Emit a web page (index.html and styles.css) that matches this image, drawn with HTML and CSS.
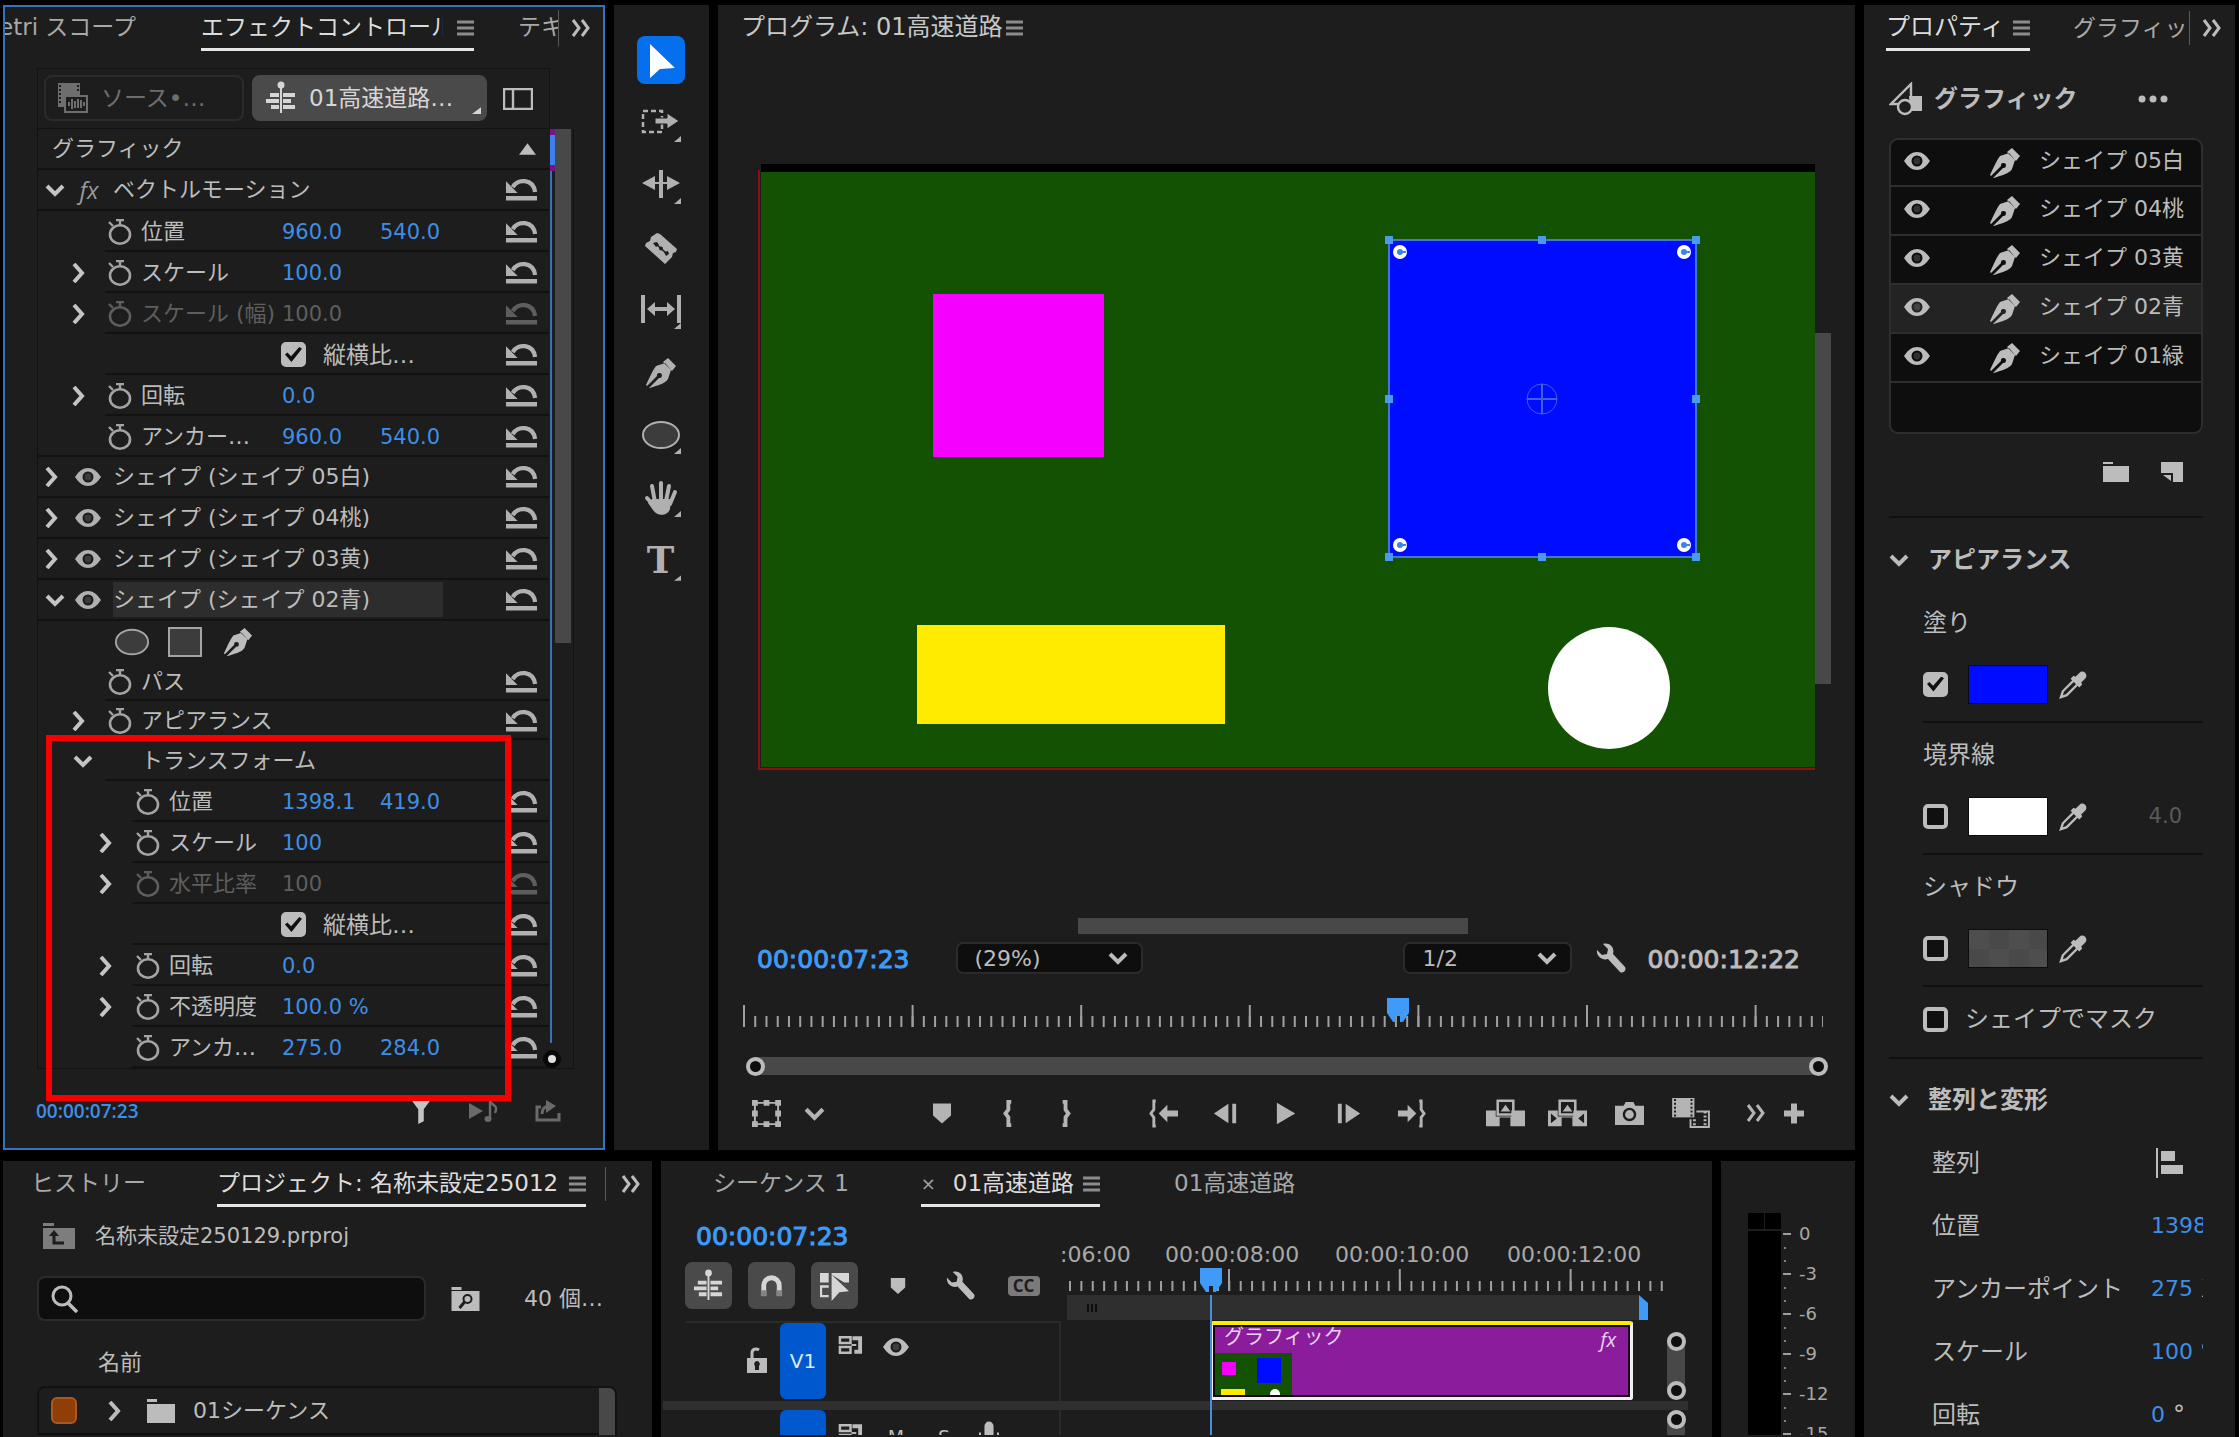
FILE: index.html
```html
<!DOCTYPE html>
<html lang="ja">
<head>
<meta charset="utf-8">
<title>01高速道路</title>
<link rel="stylesheet" href="styles.css">
</head>
<body>
<svg class="defs" width="0" height="0" aria-hidden="true">
  <symbol id="i-down" viewBox="0 0 20 14"><path d="M2 3l8 8 8-8" fill="none" stroke="currentColor" stroke-width="4"/></symbol>
  <symbol id="i-right" viewBox="0 0 14 20"><path d="M2 1l8 9-8 9" fill="none" stroke="currentColor" stroke-width="4"/></symbol>
  <symbol id="i-more" viewBox="0 0 20 18"><path d="M2 1l6 8-6 8M11 1l6 8-6 8" fill="none" stroke="currentColor" stroke-width="3"/></symbol>
  <symbol id="i-menu" viewBox="0 0 17 17"><path d="M0 3h17M0 9h17M0 15h17" stroke="currentColor" stroke-width="3"/></symbol>
  <symbol id="i-watch" viewBox="0 0 24 26"><ellipse cx="12" cy="15.500" rx="10" ry="9.200" fill="none" stroke="currentColor" stroke-width="2.600"/><path d="M8 1h8M12 1v5M1 3l4 4" stroke="currentColor" stroke-width="2.400"/></symbol>
  <symbol id="i-reset" viewBox="0 0 34 24"><path d="M8 9C13 0 29 0 31 14" fill="none" stroke="currentColor" stroke-width="4.400"/><path d="M1 3v12h12z" fill="currentColor"/><path d="M1 20.500h32" stroke="currentColor" stroke-width="4.400"/></symbol>
  <symbol id="i-eye" viewBox="0 0 26 18"><path fill-rule="evenodd" fill="currentColor" d="M0 9C4 3 8 0 13 0s9 3 13 9c-4 6-8 9-13 9S4 15 0 9zM13 3.500a5.500 5.500 0 1 0 0 11 5.500 5.500 0 0 0 0-11z"/><circle cx="13" cy="9" r="3.400" fill="currentColor" opacity=".2"/></symbol>
  <symbol id="i-pen" viewBox="0 0 32 32"><path fill="currentColor" d="M20 6l-9 3C7 14 5 20 1 28l1 1 10-10a2.500 2.500 0 1 1 2 2L4 31h1c8-3 15-4 18-9l3-9zM23 1l8 8-4 5-9-9z"/></symbol>
  <symbol id="i-folder" viewBox="0 0 28 24"><path fill="currentColor" d="M0 0h10v3H0zM0 5h28v19H0z"/></symbol>
  <symbol id="i-wrench" viewBox="0 0 30 30"><path fill="currentColor" d="M7 1c6-2 12 3 10 10l12 13c2 3-2 7-5 5L12 16C6 18 0 13 1 7l5 5 5-1 1-5z"/></symbol>
  <symbol id="i-drop" viewBox="0 0 30 30"><path d="M16 10L4 22l-2 6 6-2 12-12z" fill="none" stroke="currentColor" stroke-width="2.400"/><path fill="currentColor" d="M21 3c4-4 10 2 6 6l-4 4 1 2-3 3-9-9 3-3 2 1z"/></symbol>
  <symbol id="i-seq" viewBox="0 0 30 34"><path stroke="currentColor" stroke-width="4" d="M4 14h9M0 20h13M5 26h8M17 14h12M17 20h8M17 26h12"/><path stroke="currentColor" stroke-width="2" d="M15 4v28"/><circle cx="15" cy="4" r="3.500" fill="currentColor"/></symbol>
  <symbol id="i-marker" viewBox="0 0 20 20"><path fill="currentColor" d="M1 0h18v12l-9 8-9-8z"/></symbol>
  <symbol id="i-corner" viewBox="0 0 8 6"><path fill="currentColor" d="M8 0v6H0z"/></symbol>
  <symbol id="i-sync" viewBox="0 0 26 20"><path fill="none" stroke="currentColor" stroke-width="2.600" d="M2 2h11v6H2zM2 12h11v6H2z"/><path fill="currentColor" d="M15 1h10v18h-8v-4h4V5h-6z"/><path stroke="currentColor" stroke-width="2" d="M14 10h5"/></symbol>
  <symbol id="i-head" viewBox="0 0 22 24"><path fill="#3f9bf7" d="M0 0h22v15l-6 9h-3v-6h-4v6H6l-6-9z"/></symbol>
</svg>

<main class="app">
  <div class="work">
    <div class="upper">
      <section class="panel effects" aria-label="エフェクトコントロール">
        <nav class="tabs">
          <a href="#" class="tab tab-tail"><span>Lumetri スコープ</span></a>
          <a href="#" class="tab active tab-fx"><span class="clip">エフェクトコントロール</span><svg class="menu"><use href="#i-menu"/></svg></a>
          <a href="#" class="tab tab-cut">テキスト</a>
          <button class="more" aria-label="その他"><svg><use href="#i-more"/></svg></button>
        </nav>
        <div class="src-bar">
          <button class="src"><svg viewBox="0 0 30 30"><path fill="currentColor" d="M0 0h22v12H6v12H0z"/><path d="M2 2v20M20 2v8" stroke="#1d1d1d" stroke-width="2" stroke-dasharray="2 2"/><path fill="none" stroke="currentColor" stroke-width="2" d="M7 13h22v16H7z"/><path stroke="currentColor" stroke-width="2" d="M11 19v4M14 16v10M17 18v7M20 16v9M23 17v8M26 19v4"/></svg>ソース•…</button>
          <button class="src on"><svg><use href="#i-seq"/></svg>01高速道路…<svg class="corner"><use href="#i-corner"/></svg></button>
          <button class="icon split" aria-label="タイムライン表示"><svg viewBox="0 0 30 22"><path fill="none" stroke="currentColor" stroke-width="2.400" d="M1 1h28v20H1zM10 1v20"/></svg></button>
        </div>
        <div class="params">
          <div class="rows">
            <div class="row head"><span>グラフィック</span><svg viewBox="0 0 18 12"><path fill="currentColor" d="M9 0l9 12H0z"/></svg></div>
            <div class="row l0"><button class="tw"><svg class="dn"><use href="#i-down"/></svg></button><i class="fx">fx</i><span class="lb">ベクトルモーション</span><button class="rs"><svg><use href="#i-reset"/></svg></button></div>
            <div class="row l1"><span class="tw"></span><div class="cells"><button class="sw"><svg><use href="#i-watch"/></svg></button><span class="lb">位置</span><button class="val">960.0</button><button class="val">540.0</button><button class="rs"><svg><use href="#i-reset"/></svg></button></div></div>
            <div class="row l1"><button class="tw"><svg class="rt"><use href="#i-right"/></svg></button><div class="cells"><button class="sw"><svg><use href="#i-watch"/></svg></button><span class="lb">スケール</span><button class="val">100.0</button><button class="rs"><svg><use href="#i-reset"/></svg></button></div></div>
            <div class="row l1 off"><button class="tw"><svg class="rt"><use href="#i-right"/></svg></button><div class="cells"><button class="sw"><svg><use href="#i-watch"/></svg></button><span class="lb">スケール (幅)</span><button class="val">100.0</button><button class="rs"><svg><use href="#i-reset"/></svg></button></div></div>
            <div class="row l1"><span class="tw"></span><div class="cells"><label class="check"><input type="checkbox" checked>縦横比…</label><button class="rs"><svg><use href="#i-reset"/></svg></button></div></div>
            <div class="row l1"><button class="tw"><svg class="rt"><use href="#i-right"/></svg></button><div class="cells"><button class="sw"><svg><use href="#i-watch"/></svg></button><span class="lb">回転</span><button class="val">0.0</button><button class="rs"><svg><use href="#i-reset"/></svg></button></div></div>
            <div class="row l1 last"><span class="tw"></span><div class="cells"><button class="sw"><svg><use href="#i-watch"/></svg></button><span class="lb">アンカー…</span><button class="val">960.0</button><button class="val">540.0</button><button class="rs"><svg><use href="#i-reset"/></svg></button></div></div>
            <div class="row l0"><button class="tw"><svg class="rt"><use href="#i-right"/></svg></button><svg class="eye"><use href="#i-eye"/></svg><span class="lb">シェイプ (シェイプ 05白)</span><button class="rs"><svg><use href="#i-reset"/></svg></button></div>
            <div class="row l0"><button class="tw"><svg class="rt"><use href="#i-right"/></svg></button><svg class="eye"><use href="#i-eye"/></svg><span class="lb">シェイプ (シェイプ 04桃)</span><button class="rs"><svg><use href="#i-reset"/></svg></button></div>
            <div class="row l0"><button class="tw"><svg class="rt"><use href="#i-right"/></svg></button><svg class="eye"><use href="#i-eye"/></svg><span class="lb">シェイプ (シェイプ 03黄)</span><button class="rs"><svg><use href="#i-reset"/></svg></button></div>
            <div class="row l0"><button class="tw"><svg class="dn"><use href="#i-down"/></svg></button><svg class="eye"><use href="#i-eye"/></svg><span class="lb sel">シェイプ (シェイプ 02青)</span><button class="rs"><svg><use href="#i-reset"/></svg></button></div>
            <div class="row masks">
              <button aria-label="楕円"><svg viewBox="0 0 38 30"><ellipse cx="19" cy="15" rx="17" ry="13" fill="#3c3c3c" stroke="#a4a4a4" stroke-width="2"/></svg></button>
              <button aria-label="長方形"><svg viewBox="0 0 34 30"><path d="M1 1h32v28H1z" fill="#3c3c3c" stroke="#a4a4a4" stroke-width="2"/></svg></button>
              <button aria-label="ペン"><svg><use href="#i-pen"/></svg></button>
            </div>
            <div class="row l1 low"><span class="tw"></span><div class="cells"><button class="sw"><svg><use href="#i-watch"/></svg></button><span class="lb">パス</span><button class="rs"><svg><use href="#i-reset"/></svg></button></div></div>
            <div class="row l1 low"><button class="tw"><svg class="rt"><use href="#i-right"/></svg></button><div class="cells"><button class="sw"><svg><use href="#i-watch"/></svg></button><span class="lb">アピアランス</span><button class="rs"><svg><use href="#i-reset"/></svg></button></div></div>
            <div class="row l1"><button class="tw"><svg class="dn"><use href="#i-down"/></svg></button><div class="cells"><span class="lb group">トランスフォーム</span></div></div>
            <div class="row l2"><span class="tw"></span><div class="cells"><button class="sw"><svg><use href="#i-watch"/></svg></button><span class="lb">位置</span><button class="val">1398.1</button><button class="val">419.0</button><button class="rs"><svg><use href="#i-reset"/></svg></button></div></div>
            <div class="row l2"><button class="tw"><svg class="rt"><use href="#i-right"/></svg></button><div class="cells"><button class="sw"><svg><use href="#i-watch"/></svg></button><span class="lb">スケール</span><button class="val">100</button><button class="rs"><svg><use href="#i-reset"/></svg></button></div></div>
            <div class="row l2 off"><button class="tw"><svg class="rt"><use href="#i-right"/></svg></button><div class="cells"><button class="sw"><svg><use href="#i-watch"/></svg></button><span class="lb">水平比率</span><button class="val">100</button><button class="rs"><svg><use href="#i-reset"/></svg></button></div></div>
            <div class="row l2"><span class="tw"></span><div class="cells"><label class="check"><input type="checkbox" checked>縦横比…</label><button class="rs"><svg><use href="#i-reset"/></svg></button></div></div>
            <div class="row l2"><button class="tw"><svg class="rt"><use href="#i-right"/></svg></button><div class="cells"><button class="sw"><svg><use href="#i-watch"/></svg></button><span class="lb">回転</span><button class="val">0.0</button><button class="rs"><svg><use href="#i-reset"/></svg></button></div></div>
            <div class="row l2"><button class="tw"><svg class="rt"><use href="#i-right"/></svg></button><div class="cells"><button class="sw"><svg><use href="#i-watch"/></svg></button><span class="lb">不透明度</span><button class="val">100.0 %</button><button class="rs"><svg><use href="#i-reset"/></svg></button></div></div>
            <div class="row l2"><span class="tw"></span><div class="cells"><button class="sw"><svg><use href="#i-watch"/></svg></button><span class="lb">アンカ…</span><button class="val">275.0</button><button class="val">284.0</button><button class="rs"><svg><use href="#i-reset"/></svg></button></div></div>
          </div>
          <div class="mini"><div class="mini-line"></div><div class="mini-scroll"></div><span class="mini-knob"></span></div>
        </div>
        <div class="fx-foot">
          <span class="tc-small">00:00:07:23</span>
          <button aria-label="フィルター"><svg class="f1" viewBox="0 0 26 28"><path fill="#c4c4c4" d="M1 0h24l-9 12v13l-6 3V12z"/></svg></button>
          <button aria-label="オーディオ再生"><svg class="f2" viewBox="0 0 30 24"><path fill="currentColor" d="M0 4l14 8-14 8z"/><path fill="none" stroke="currentColor" stroke-width="2.400" d="M21 20V2c2 5 9 4 5 12"/><ellipse cx="19" cy="20" rx="3.500" ry="3" fill="currentColor"/></svg></button>
          <button aria-label="書き出し"><svg class="f3" viewBox="0 0 26 22"><path fill="none" stroke="currentColor" stroke-width="3" d="M6 7H2v13h22v-7M7 14c0-5 3-8 7-8"/><path fill="currentColor" d="M11 0l10 6-10 7z"/></svg></button>
        </div>
        <div class="callout"></div>
      </section>

      <section class="panel tools" aria-label="ツール">
        <button class="on" aria-label="選択"><svg viewBox="0 0 48 48"><path fill="#fff" d="M13 8l25 24-15 1-10 9z"/></svg></button>
        <button aria-label="トラックの前方選択"><svg viewBox="0 0 48 48"><path d="M6 12h19v21H6z" fill="none" stroke="currentColor" stroke-width="2.500" stroke-dasharray="5 3"/><path fill="currentColor" stroke="#1d1d1d" d="M18 19h12v-5l12 8-12 8v-5H18z"/><path fill="currentColor" d="M44 37v6h-7z"/></svg></button>
        <button aria-label="リップル"><svg viewBox="0 0 48 48"><path fill="currentColor" d="M22 9h4v28h-4zM5 22l13-7v6h12v-6l13 7-13 7v-6H18v6zM44 37v6h-7z"/></svg></button>
        <button aria-label="レーザー"><svg viewBox="0 0 48 48"><path fill="currentColor" d="M20 9l3 1 17 15-1 3-3 1-1 4-7 7-20-18 1-3 4-2 1-4z"/><path d="M18 19l12 11" stroke="#1d1d1d" stroke-width="1.600"/><path fill="#1d1d1d" d="M16 19l4-1 2 3-3 2zM27 28l4-1 1 3-3 2z"/><circle cx="24" cy="24.500" r="2" fill="#1d1d1d"/></svg></button>
        <button aria-label="スリップ"><svg viewBox="0 0 48 48"><path fill="currentColor" d="M4 9h4v28H4zM40 9h4v28h-4zM10 23l8-7v5h12v-5l8 7-8 7v-5H18v5zM44 37v6h-7z"/></svg></button>
        <button aria-label="ペン"><svg viewBox="-8 -8 48 48"><use href="#i-pen" width="32" height="32"/></svg></button>
        <button aria-label="楕円"><svg viewBox="0 0 48 48"><ellipse cx="24" cy="24" rx="18" ry="13" fill="#3c3c3c" stroke="currentColor" stroke-width="2"/><path fill="currentColor" d="M44 37v6h-7z"/></svg></button>
        <button aria-label="手のひら"><svg viewBox="0 0 48 48"><g fill="none" stroke="currentColor" stroke-width="4" stroke-linecap="round"><path d="M18 28L15 12M24 26V9M29 27l3-15M33 30l5-12M18 33L10 24"/></g><path fill="currentColor" d="M15 25h19l-1 10c-2 7-13 8-17 1l-5-7z"/><path fill="currentColor" d="M44 37v6h-7z"/></svg></button>
        <button class="type" aria-label="文字">T<svg><use href="#i-corner"/></svg></button>
      </section>

      <section class="panel program" aria-label="プログラム">
        <nav class="tabs"><a href="#" class="tab">プログラム: 01高速道路<svg class="menu"><use href="#i-menu"/></svg></a></nav>
        <div class="stage">
          <svg class="canvas" viewBox="0 0 1057 608">
            <path fill="#000" d="M3 0h1054v8H3z"/><path fill="#145203" d="M3 8h1054v595H3z"/>
            <path d="M1 6v599h1056" fill="none" stroke="#8c1010" stroke-width="2"/>
            <path fill="#f400ff" d="M175 130h171v163H175z"/><path fill="#ffeb00" d="M159 461h308v99H159z"/>
            <circle cx="851" cy="524" r="61" fill="#fff"/>
            <path fill="#000cff" stroke="#3f78d8" stroke-width="2" d="M631 76h307v317H631z"/>
            <g fill="none" stroke="#3c62dc"><circle cx="784" cy="235" r="15"/><path d="M769 235h30M784 220v30" stroke-width="2"/></g>
            <path fill="#4a9bf0" d="M627 72h8v8h-8zM780 72h8v8h-8zM934 72h8v8h-8zM627 231h8v8h-8zM934 231h8v8h-8zM627 389h8v8h-8zM780 389h8v8h-8zM934 389h8v8h-8z"/>
            <g fill="#fff"><circle cx="642" cy="88" r="7"/><circle cx="926" cy="88" r="7"/><circle cx="642" cy="381" r="7"/><circle cx="926" cy="381" r="7"/></g>
            <g fill="#3a86e0"><circle cx="642" cy="88" r="3"/><circle cx="926" cy="88" r="3"/><circle cx="642" cy="381" r="3"/><circle cx="926" cy="381" r="3"/><path d="M642 87h6v2h-6zM926 87h6v2h-6zM642 380h6v2h-6zM926 380h6v2h-6z"/></g>
          </svg>
          <div class="vscroll"></div>
        </div>
        <div class="hscroll"></div>
        <div class="pg-info">
          <span class="tc blue">00:00:07:23</span>
          <span class="drop d1"><select aria-label="ズーム"><option>(29%)</option></select><svg><use href="#i-down"/></svg></span>
          <span class="drop d2"><select aria-label="再生時の解像度"><option>1/2</option></select><svg><use href="#i-down"/></svg></span>
          <button class="wr" aria-label="設定"><svg><use href="#i-wrench"/></svg></button>
          <span class="tc">00:00:12:22</span>
        </div>
        <div class="pg-ruler">
          <svg class="ticks"><path d="M1 23.500h1080" stroke="#a0a0a0" stroke-width="11" stroke-dasharray="2 9.240"/><path d="M1 18h1080" stroke="#a0a0a0" stroke-width="22" stroke-dasharray="2 166.600"/></svg>
          <svg class="head"><use href="#i-head"/></svg>
        </div>
        <div class="zoombar"><i></i><i></i></div>
        <div class="transport">
          <div class="g ga">
            <button aria-label="変形"><svg viewBox="0 0 30 30"><path d="M3 4h24v22H3z" fill="none" stroke="currentColor" stroke-width="2"/><path fill="currentColor" d="M0 1h6v6H0zM12 1h6v6h-6zM24 1h6v6h-6zM0 12h6v6H0zM24 12h6v6h-6zM0 23h6v6H0zM12 23h6v6h-6zM24 23h6v6h-6z"/></svg></button>
            <button aria-label="開く"><svg class="dn"><use href="#i-down"/></svg></button>
          </div>
          <div class="g gb">
            <button aria-label="マーカー"><svg class="mk"><use href="#i-marker"/></svg></button>
            <button aria-label="インをマーク"><svg viewBox="0 0 30 30"><path d="M22 3h-3v8l-3 4 3 4v8h3" fill="none" stroke="currentColor" stroke-width="4"/></svg></button>
            <button aria-label="アウトをマーク"><svg viewBox="0 0 30 30"><path d="M11 3h3v8l3 4-3 4v8h-3" fill="none" stroke="currentColor" stroke-width="4"/></svg></button>
          </div>
          <div class="g gc">
            <button aria-label="インへ移動"><svg viewBox="0 0 30 30"><path d="M7 2H5v9l-3 4 3 4v9h2" fill="none" stroke="currentColor" stroke-width="3"/><path fill="currentColor" d="M10 15l9-9v6h11v6H19v6z"/></svg></button>
            <button aria-label="前へ"><svg viewBox="0 0 30 30"><path fill="currentColor" d="M3 15l15-10v20zM22 5h4v20h-4z"/></svg></button>
            <button aria-label="再生"><svg viewBox="0 0 30 30"><path fill="currentColor" d="M4 4l19 11L4 26z"/></svg></button>
            <button aria-label="次へ"><svg viewBox="0 0 30 30"><path fill="currentColor" d="M26 15L11 5v20zM3 5h4v20H3z"/></svg></button>
            <button aria-label="アウトへ移動"><svg viewBox="0 0 30 30"><path d="M23 2h2v9l3 4-3 4v9h-2" fill="none" stroke="currentColor" stroke-width="3"/><path fill="currentColor" d="M20 15l-9-9v6H1v6h10v6z"/></svg></button>
          </div>
          <div class="g gd">
            <button aria-label="リフト"><svg class="wide" viewBox="0 0 40 30"><path fill="currentColor" d="M0 12h10v6h16v-6h14v16H25v-9H14v9H0zM20 6l5 7H15z"/><path d="M12 2h16v14H12z" fill="none" stroke="currentColor" stroke-width="2.600"/></svg></button>
            <button aria-label="抽出"><svg class="wide" viewBox="0 0 40 30"><path fill="currentColor" fill-rule="evenodd" d="M0 12h10v6h16v-6h14v16H25v-9H14v9H0zM3 15l6 5-6 5zM37 15l-6 5 6 5zM20 6l5 7H15z"/><path d="M12 2h16v14H12z" fill="none" stroke="currentColor" stroke-width="2.600"/></svg></button>
            <button aria-label="フレームを書き出し"><svg viewBox="0 0 30 30"><path fill="currentColor" fill-rule="evenodd" d="M0 7h9l2-4h8l2 4h9v20H0zM15 9a7 7 0 1 0 0 14 7 7 0 0 0 0-14z"/><circle cx="15" cy="16" r="4.500" fill="currentColor"/></svg></button>
            <button aria-label="比較表示"><svg class="wide" viewBox="0 0 40 32"><path fill="currentColor" d="M0 0h23v20H0z"/><path d="M3 1v18M20 1v18" stroke="#1d1d1d" stroke-width="2" stroke-dasharray="2 2"/><path d="M25 14h13v16H19v-8" fill="none" stroke="currentColor" stroke-width="2"/><path d="M23 22v8M34 14v16" stroke="currentColor" stroke-width="3" stroke-dasharray="2 2"/></svg></button>
          </div>
          <div class="g ge">
            <button aria-label="その他"><svg class="mo"><use href="#i-more"/></svg></button>
            <button aria-label="追加"><svg class="mk" viewBox="0 0 20 20"><path d="M10 0v20M0 10h20" stroke="currentColor" stroke-width="6"/></svg></button>
          </div>
        </div>
      </section>
    </div>

    <div class="lower">
      <section class="panel project" aria-label="プロジェクト">
        <nav class="tabs">
          <a href="#" class="tab tab-h">ヒストリー</a>
          <a href="#" class="tab active tab-p"><span class="clip">プロジェクト: 名称未設定250129</span><svg class="menu"><use href="#i-menu"/></svg></a>
          <button class="more" aria-label="その他"><svg><use href="#i-more"/></svg></button>
        </nav>
        <div class="path"><svg viewBox="0 0 32 26"><path fill="#7d7d7d" d="M0 0h11v3H0zM0 5h32v21H0z"/><path d="M11 10v10h10" fill="none" stroke="#1d1d1d" stroke-width="3"/><path fill="#1d1d1d" d="M11 7l5 6H6z"/></svg>名称未設定250129.prproj</div>
        <div class="find">
          <label class="search"><svg viewBox="0 0 28 28"><circle cx="11" cy="11" r="9" fill="none" stroke="currentColor" stroke-width="3"/><path d="M17 18l9 9" stroke="currentColor" stroke-width="3.500"/></svg><input type="text" aria-label="検索"></label>
          <button aria-label="検索ビン"><svg viewBox="0 0 28 24"><path fill="currentColor" d="M0 0h10v3H0zM0 4h28v20H0z"/><circle cx="16" cy="12" r="4" fill="none" stroke="#1d1d1d" stroke-width="2"/><path d="M13 15l-5 6" stroke="#1d1d1d" stroke-width="3"/></svg></button>
          <span>40 個…</span>
        </div>
        <div class="col-name">名前</div>
        <div class="bins"><div class="bin"><i></i><svg class="rt"><use href="#i-right"/></svg><svg class="fo"><use href="#i-folder"/></svg>01シーケンス</div><div class="bin-scroll"></div></div>
      </section>

      <section class="panel timeline" aria-label="タイムライン">
        <nav class="tabs">
          <a href="#" class="tab tab-s">シーケンス 1</a>
          <a href="#" class="tab active tab-q"><small>×</small>01高速道路<svg class="menu"><use href="#i-menu"/></svg></a>
          <a href="#" class="tab tab-r">01高速道路</a>
        </nav>
        <div class="tl-top">
          <div class="tl-ctl">
            <span class="tc blue">00:00:07:23</span>
            <div class="tl-btns">
              <button class="on" aria-label="ネスト"><svg><use href="#i-seq"/></svg></button>
              <button class="on" aria-label="スナップ"><svg viewBox="0 0 30 34"><path d="M7 27V17a8 8 0 0 1 16 0v10" fill="none" stroke="currentColor" stroke-width="5"/><path stroke="#858585" stroke-width="6" d="M4 25h6M20 25h6"/></svg></button>
              <button class="on" aria-label="リンクされた選択"><svg viewBox="0 0 30 34"><path fill="currentColor" d="M0 4h9v10H0zM12 4h18v10h-5L12 6zM12 6l18 17-10 1-8 9z"/><path fill="none" stroke="currentColor" stroke-width="2.500" d="M9 18H1v10h8"/></svg></button>
              <button aria-label="マーカー"><svg class="mk2"><use href="#i-marker"/></svg></button>
              <button aria-label="設定"><svg class="wr2"><use href="#i-wrench"/></svg></button>
              <button class="cc"><b>CC</b></button>
            </div>
          </div>
          <div class="tl-time">
            <svg class="tl-scale"><g class="tl-nums"><text x="-7" y="55">:06:00</text><text x="98" y="55">00:00:08:00</text><text x="268" y="55">00:00:10:00</text><text x="440" y="55">00:00:12:00</text></g><path d="M2 79h595" stroke="#a0a0a0" stroke-width="10" stroke-dasharray="2 9.380"/><path d="M161 73h436" stroke="#a0a0a0" stroke-width="22" stroke-dasharray="2 168.800"/></svg>
            <div class="workbar"><i></i><i></i><i></i><svg viewBox="0 0 9 25"><path fill="#3f9bf7" d="M0 0l9 8v17H0z"/></svg></div>
            <svg class="head"><use href="#i-head"/></svg>
            <div class="playline"></div>
          </div>
        </div>
        <div class="track">
          <div class="th">
            <svg class="lock" viewBox="0 0 22 26"><path fill="currentColor" fill-rule="evenodd" d="M1 11h20v15H1zM11 14a3 3 0 0 0-2 5v4h4v-4a3 3 0 0 0-2-5z"/><path d="M6 12V6c0-4 4-5 7-3" fill="none" stroke="currentColor" stroke-width="3"/></svg>
            <button class="vb">V1</button>
            <svg class="sync"><use href="#i-sync"/></svg><svg class="eye"><use href="#i-eye"/></svg>
          </div>
          <div class="lane"><div class="clipbar"><span>グラフィック</span><i class="fx">fx</i>
            <svg viewBox="0 0 77 42"><path fill="#145203" d="M0 0h77v42H0z"/><path fill="#f400ff" d="M7 9h14v13H7z"/><path fill="#000cff" d="M42 5h24v25H42z"/><path fill="#ffeb00" d="M6 36h24v6H6z"/><circle cx="60" cy="41" r="5" fill="#fff"/></svg></div></div>
          <div class="vz"><i></i><i></i></div>
        </div>
        <div class="band"></div>
        <div class="track">
          <div class="th audio">
            <span class="lock"></span><button class="vb">A1</button>
            <svg class="sync"><use href="#i-sync"/></svg><button class="ms">M</button><button class="ms">S</button>
            <svg class="mic" viewBox="0 0 22 34"><rect x="6" width="10" height="20" rx="5" fill="currentColor"/><path d="M1 12v4c0 11 20 11 20 0v-4M11 24v8" fill="none" stroke="currentColor" stroke-width="2.500"/></svg>
          </div>
          <div class="lane"></div>
          <div class="vz"><i></i><i></i></div>
        </div>
      </section>

      <section class="panel meter" aria-label="オーディオメーター">
        <div class="bars"><i></i><i></i><b></b></div>
        <ul><li>0</li><li>-3</li><li>-6</li><li>-9</li><li>-12</li><li>-15</li></ul>
      </section>
    </div>
  </div>

  <section class="panel props" aria-label="プロパティ">
    <nav class="tabs">
      <a href="#" class="tab active tab-pr">プロパティ<svg class="menu"><use href="#i-menu"/></svg></a>
      <a href="#" class="tab tab-g">グラフィックテンプレート</a>
      <button class="more" aria-label="その他"><svg><use href="#i-more"/></svg></button>
    </nav>
    <div class="pr-title"><svg viewBox="0 0 34 34"><path d="M22 14V2L2 22h8" fill="none" stroke="currentColor" stroke-width="2.400"/><path fill="currentColor" d="M20 14h13v15H21z"/><circle cx="16" cy="25" r="7" fill="#1d1d1d" stroke="currentColor" stroke-width="2.400"/></svg><h2>グラフィック</h2><button aria-label="メニュー"><svg viewBox="0 0 30 8"><g fill="currentColor"><circle cx="4" cy="4" r="3.500"/><circle cx="15" cy="4" r="3.500"/><circle cx="26" cy="4" r="3.500"/></g></svg></button></div>
    <ul class="layers">
      <li><svg class="eye"><use href="#i-eye"/></svg><svg class="pen"><use href="#i-pen"/></svg>シェイプ 05白</li>
      <li><svg class="eye"><use href="#i-eye"/></svg><svg class="pen"><use href="#i-pen"/></svg>シェイプ 04桃</li>
      <li><svg class="eye"><use href="#i-eye"/></svg><svg class="pen"><use href="#i-pen"/></svg>シェイプ 03黄</li>
      <li class="sel"><svg class="eye"><use href="#i-eye"/></svg><svg class="pen"><use href="#i-pen"/></svg>シェイプ 02青</li>
      <li><svg class="eye"><use href="#i-eye"/></svg><svg class="pen"><use href="#i-pen"/></svg>シェイプ 01緑</li>
    </ul>
    <div class="layer-btns"><button aria-label="グループ"><svg viewBox="0 0 26 20"><path fill="currentColor" d="M0 0h10v2H0zM0 4h26v16H0z"/></svg></button><button aria-label="新規レイヤー"><svg viewBox="0 0 22 20"><path fill="currentColor" d="M0 0h22v20H12v-9H0zM2 13h8v6z"/></svg></button></div>
    <div class="sec">
      <h3><svg><use href="#i-down"/></svg>アピアランス</h3>
      <div class="ap"><p>塗り</p><div><input type="checkbox" checked aria-label="塗り"><button class="swatch s-blue" aria-label="塗りの色"></button><button class="dr" aria-label="スポイト"><svg><use href="#i-drop"/></svg></button></div></div>
      <div class="ap"><p>境界線</p><div><input type="checkbox" aria-label="境界線"><button class="swatch s-white" aria-label="境界線の色"></button><button class="dr" aria-label="スポイト"><svg><use href="#i-drop"/></svg></button><span class="w">4.0</span></div></div>
      <div class="ap"><p>シャドウ</p><div><input type="checkbox" aria-label="シャドウ"><button class="swatch s-none" aria-label="シャドウの色"></button><button class="dr" aria-label="スポイト"><svg><use href="#i-drop"/></svg></button></div></div>
      <label class="mask"><input type="checkbox">シェイプでマスク</label>
    </div>
    <div class="sec al">
      <h3><svg><use href="#i-down"/></svg>整列と変形</h3>
      <div class="kv"><span>整列</span><button aria-label="左揃え"><svg viewBox="0 0 28 30"><path fill="currentColor" d="M0 0h2v30H0zM5 3h14v10H5zM5 17h22v9H5z"/></svg></button></div>
      <div class="kv"><span>位置</span><button>1398.1</button></div>
      <div class="kv"><span>アンカーポイント</span><button>275</button><em>X</em></div>
      <div class="kv"><span>スケール</span><button>100</button><em>%</em></div>
      <div class="kv"><span>回転</span><button>0</button><em>°</em></div>
    </div>
  </section>
</main>
</body>
</html>
```
FILE: styles.css
```css
* { box-sizing: border-box; }
body { margin: 0; background: #000; color: #bcbcbc; font: 22px/30px "DejaVu Sans", "Noto Sans CJK JP", sans-serif; overflow: hidden; }
button { margin: 0; padding: 0; border: 0; background: none; color: inherit; font: inherit; display: grid; place-items: center; }
a { color: inherit; text-decoration: none; }
ul, p, h2, h3 { margin: 0; padding: 0; list-style: none; }
svg { display: block; flex: none; }
.defs { position: absolute; }

.app { display: flex; gap: 9px; height: 100vh; padding: 5px 4px 0 3px; }
.work { flex: 1; min-width: 0; display: flex; flex-direction: column; gap: 11px; }
.upper { display: flex; flex: none; gap: 9px; }
.lower { display: flex; flex: 1; min-height: 0; gap: 9px; }
.panel { background: #1d1d1d; border: 2px solid #1d1d1d; overflow: hidden; position: relative; }

/* tab strips */
.tabs { display: flex; height: 44px; }
.tab { display: flex; align-items: center; height: 44px; font-size: 23px; line-height: 41px; white-space: nowrap; border-bottom: 3px solid transparent; color: #a8a8a8; }
.tab.active { border-color: #e6e6e6; color: #dcdcdc; }
.clip { flex: 1; min-width: 0; overflow: hidden; }
.menu { width: 17px; height: 17px; color: #8c8c8c; margin-left: 11px; }
.more svg { width: 22px; height: 18px; color: #bcbcbc; }
.more { width: 50px; height: 42px; }

/* effect controls */
.effects { width: 602px; height: 1145px; border-color: #3574bd; }
.tab-tail { width: 131px; justify-content: flex-end; overflow: hidden; }
.tab-fx { width: 273px; margin-left: 65px; }
.tab-fx .menu { margin-left: 14px; }
.tab-cut { width: 41px; margin-left: 44px; overflow: hidden; height: 38px; margin-top: 3px; line-height: 35px; border-right: 1px solid #5a5a5a; }
.effects .more { width: 44px; }
.src-bar { display: flex; gap: 8px; width: 513px; margin: 17px 0 0 32px; padding: 6px; border: 1px solid #121212; height: 61px; }
.src { display: flex; align-items: center; gap: 13px; width: 200px; height: 46px; padding-left: 12px; border: 2px solid #2b2b2b; border-radius: 8px; color: #6e6e6e; font-size: 23px; position: relative; }
.src svg { width: 30px; height: 36px; }
.src.on { width: 235px; background: #4a4a4a; border-color: #4a4a4a; color: #d6d6d6; white-space: nowrap; }
.src .corner { position: absolute; right: 4px; bottom: 4px; width: 9px; height: 9px; }
.split { margin-left: 8px; }
.split svg { width: 30px; height: 22px; }
.params { display: flex; margin-left: 32px; width: 537px; border: 1px solid #121212; border-top: 0; }
.rows { width: 511px; }
.row { display: flex; height: 41px; align-items: center; border-bottom: 2px solid #121212; }
.head { justify-content: space-between; padding: 0 13px 0 14px; }
.head svg { width: 17px; height: 12px; }
.l1, .l2, .masks { border-bottom: 0; }
.l1.last { border-bottom: 2px solid #121212; }
.l1.last .cells { border-bottom: 0; }
.cells { flex: 1; display: flex; align-items: center; align-self: stretch; padding-top: 2px; border-bottom: 2px solid #121212; }
.l1.low { height: 39px; }
.tw { flex: none; height: 36px; color: #c4c4c4; }
.l0 .tw { width: 34px; }
.l0 .rt { margin-right: 6px; }
.l1 .tw { width: 67px; padding-left: 15px; }
.l1 .dn { margin-left: 8px; }
.l2 .tw { width: 94px; padding-left: 42px; }
.dn { width: 20px; height: 14px; }
.rt { width: 14px; height: 20px; }
.fx { font: italic 24px/30px "Open Sans", sans-serif; }
.l0 .fx { width: 34px; text-align: center; color: #999; }
.eye { width: 26px; height: 18px; }
.l0 .eye { margin: 0 5px 0 3px; color: #b0b0b0; }
.l0 .lb { margin-left: 7px; }
.lb { white-space: nowrap; flex: none; }
.sel.lb { background: #2d2d2d; width: 330px; line-height: 35px; }
.sw { width: 30px; flex: none; }
.sw svg { width: 24px; height: 26px; color: #a4a4a4; }
.l1 .lb { width: 141px; margin-left: 6px; }
.l2 .sw { width: 32px; }
.l2 .lb { width: 113px; margin-left: 5px; }
.l1 .lb.group { margin-left: 36px; }
.val { width: 98px; flex: none; font-size: 21px; color: #3f8ee6; place-items: center start; white-space: nowrap; }
.rs { margin-left: auto; margin-right: 11px; }
.rs svg { width: 33px; height: 24px; color: #b0b0b0; }
.off .lb, .off .val, .off .sw svg, .off .rs svg { color: #5e5e5e; }
.check { display: flex; align-items: center; gap: 17px; margin-left: 176px; font-size: 23px; }
.l2 .check { margin-left: 149px; }
input[type=checkbox] { appearance: none; flex: none; width: 25px; height: 25px; margin: 0; border: 4px solid #bcbcbc; border-radius: 5px; background: #101010; display: grid; place-items: center; }
input[type=checkbox]:checked { background: #bcbcbc; }
input[type=checkbox]:checked::before { content: ""; width: 17px; height: 15px; background: #101010; clip-path: polygon(0 50%, 14% 36%, 36% 62%, 84% 0, 100% 12%, 38% 100%); }
.masks { gap: 17px; padding-left: 76px; }
.masks button { width: 36px; }
.masks svg { width: 36px; height: 30px; }
.mini { flex: 1; display: flex; gap: 3px; position: relative; padding-left: 1px; }
.mini-line { width: 2px; height: 914px; background: #3574bd; }
.mini-line::before { content: ""; display: block; width: 5px; height: 42px; background: linear-gradient(#7a1288 6px, #3f7ff0 6px, #3f7ff0 36px, #7a1288 36px); }
.mini-scroll { width: 16px; height: 514px; background: #484848; }
.mini-knob { position: absolute; left: -6px; bottom: 0; width: 18px; height: 18px; border: 5px solid #080808; border-radius: 50%; background: #e0e0e0; }
.fx-foot { display: flex; align-items: center; height: 40px; margin: 22px 42px 0 31px; color: #6a6a6a; gap: 36px; }
.tc-small { font: 600 19px/30px "Open Sans", sans-serif; color: #3f8ee6; margin-right: auto; }
.f1 { width: 24px; height: 28px; }
.f2 { width: 30px; height: 24px; }
.f3 { width: 26px; height: 22px; }
.callout { position: absolute; left: 41px; top: 728px; width: 465px; height: 366px; border: 6px solid #f90000; }

/* tools */
.tools { width: 95px; display: flex; flex-direction: column; align-items: center; justify-content: space-between; padding: 29px 2px 564px 0; color: #b0b0b0; }
.tools button { width: 48px; height: 48px; border-radius: 8px; position: relative; }
.tools svg { width: 48px; height: 48px; }
.tools .on { background: #056fed; }
.tools .type { font: 700 37px/44px "DejaVu Serif", serif; }
.tools .type svg { position: absolute; right: 4px; bottom: 3px; width: 7px; height: 6px; }

/* program monitor */
.program { flex: 1; min-width: 0; }
.program .tab { margin-left: 21px; color: #c8c8c8; font-size: 24px; }
.program .menu { margin-left: 3px; }
.stage { display: flex; align-items: flex-start; margin: 113px 22px 0 38px; }
.canvas { flex: 1; min-width: 0; height: auto; }
.vscroll { width: 16px; height: 351px; margin-top: 169px; background: #484848; }
.hscroll { width: 390px; height: 16px; margin: 146px auto 0 358px; background: #484848; }
.pg-info { display: flex; align-items: center; height: 32px; margin: 8px 53px 0 37px; }
.tc { font-size: 25px; line-height: 34px; -webkit-text-stroke: 1px; }
.pg-info .tc { padding-top: 4px; }
.blue { color: #3f9bf7; }
.drop { position: relative; display: flex; align-items: center; }
.drop select { appearance: none; width: 100%; height: 32px; padding: 0 17px; border: 2px solid #2b2b2b; border-radius: 7px; background: #0e0e0e; color: #bcbcbc; font: inherit; font-size: 22px; }
.drop svg { position: absolute; right: 15px; width: 20px; height: 14px; }
.d1 { width: 187px; margin-left: 46px; }
.d2 { width: 169px; margin-left: auto; }
.wr { margin: 0 21px 0 24px; }
.wr svg { width: 30px; height: 30px; }
.pg-ruler { position: relative; margin: 24px 28px 0 22px; height: 30px; }
.ticks { width: 100%; height: 30px; }
.head { overflow: visible; }
svg.head { position: absolute; left: 645px; top: 0; width: 22px; height: 24px; padding: 0; }
.zoombar { display: flex; justify-content: space-between; align-items: center; height: 18px; margin: 29px 25px 0 26px; background: linear-gradient(#484848, #484848) center / calc(100% - 20px) 100% no-repeat; }
.zoombar i, .vz i { width: 19px; height: 19px; border: 4px solid #bcbcbc; border-radius: 50%; background: #0e0e0e; }
.transport { display: flex; height: 60px; margin: 8px 0 0 22px; align-items: center; }
.g { display: flex; }
.g button { width: 62px; height: 40px; color: #b4b4b4; }
.g svg { width: 29px; height: 29px; }
.g .wide { width: 39px; height: 31px; }
.g svg.dn { width: 21px; height: 15px; }
.g .mk { width: 20px; height: 21px; }
.g .mo { width: 20px; height: 18px; }
.ga button { width: 48px; }
.gb { margin-left: 73px; }
.gc { margin-left: 35px; }
.gd { margin-left: 32px; }
.ge { margin-left: 15px; }
.ge button { width: 38px; }

/* project */
.project { width: 649px; flex: none; }
.tab-h { margin-left: 26px; }
.tab-p { width: 369px; margin-left: auto; }
.project .more { width: 45px; margin-left: 19px; border-left: 1px solid #5a5a5a; height: 34px; margin-top: 4px; }
.project .more svg { margin-left: 6px; }
.path { display: flex; align-items: center; gap: 20px; height: 44px; margin: 7px 0 0 38px; font-size: 21px; }
.path svg { width: 32px; height: 26px; }
.find { display: flex; align-items: center; margin: 18px 0 0 32px; }
.search { display: flex; align-items: center; width: 389px; height: 45px; padding: 0 12px; background: #0e0e0e; border: 2px solid #2b2b2b; border-radius: 8px; }
.search svg { width: 28px; height: 28px; }
.search input { flex: 1; min-width: 0; border: 0; background: none; color: inherit; font: inherit; outline: 0; }
.find button svg { width: 29px; height: 24px; }
.find button { margin: 0 44px 0 25px; }
.col-name { margin: 27px 0 0 93px; }
.bins { display: flex; justify-content: space-between; margin: 8px 33px 0 32px; height: 60px; border: 2px solid #121212; border-radius: 8px 8px 0 0; overflow: hidden; }
.bin { flex: 1; display: flex; align-items: center; height: 47px; padding-left: 12px; border-bottom: 2px solid #0e0e0e; }
.bin i { width: 26px; height: 27px; margin-right: 31px; background: #8f3f06; border: 2px solid #a95a20; border-radius: 6px; }
.bin .fo { width: 28px; height: 24px; margin: 0 18px 0 25px; }
.bin-scroll { width: 16px; background: #484848; }

/* timeline */
.timeline { flex: 1; min-width: 0; }
.tab-s { margin-left: 50px; }
.tab-q { margin-left: 72px; }
.tab-q small { width: 32px; font-size: 18px; color: #a0a0a0; }
.tab-q .menu { margin-left: 9px; }
.tab-r { margin-left: 74px; }
.tl-top { display: grid; grid-template-columns: 404px 1fr; height: 114px; }
.tl-ctl { padding: 13px 0 0 33px; }
.tl-ctl .tc { display: block; }
.tl-btns { display: flex; gap: 16px; margin: 8px 0 0 -11px; }
.tl-btns button { width: 47px; height: 47px; border-radius: 7px; }
.tl-btns .on { background: #4a4a4a; color: #d6d6d6; }
.tl-btns svg { width: 29px; height: 33px; }
.tl-btns .mk2 { width: 16px; height: 18px; }
.tl-btns .wr2 { width: 29px; height: 29px; }
.tl-btns .cc b { width: 32px; background: #7a7a7a; color: #1d1d1d; border-radius: 4px; font: 700 17px/20px "Open Sans", sans-serif; text-align: center; }
.tl-time { position: relative; }
.tl-scale { width: 100%; height: 88px; overflow: visible; }
.tl-nums { font-size: 22px; fill: #a8a8a8; }
.workbar { display: flex; align-items: center; gap: 2px; width: 573px; height: 25px; padding-left: 20px; background: #2f2f2f; position: relative; }
.workbar i { width: 2px; height: 8px; background: #0e0e0e; }
.workbar svg { position: absolute; left: 572px; width: 9px; height: 25px; }
.tl-time svg.head { left: 133px; top: 61px; }
.playline { position: absolute; left: 143px; top: 88px; width: 2px; height: 200px; background: #4a8fdc; z-index: 1; }
.track { display: flex; height: 80px; }
.th { width: 375px; flex: none; margin-left: 23px; border: 2px solid #2b2b2b; border-width: 2px 2px 0 0; display: flex; align-items: flex-start; }
.lock { width: 22px; height: 26px; margin: 24px 12px 0 60px; }
.vb { width: 46px; height: 76px; border-radius: 6px; background: #0058cf; color: #dce8f8; font-size: 20px; }
.sync { width: 25px; height: 20px; margin: 12px 20px 0 12px; }
.th .eye { margin-top: 15px; }
.lane { flex: 1; padding-left: 149px; }
.clipbar { position: relative; width: 423px; height: 79px; border: 3px solid #f0f0f0; border-top: 4px solid #ffeb00; border-radius: 3px; background: #8b1c9b; box-shadow: inset 0 0 0 2px #180318; padding: 0 14px 0 11px; display: flex; justify-content: space-between; color: #e8d4ee; font-size: 20px; line-height: 25px; }
.clipbar .fx { font-size: 20px; line-height: 30px; }
.clipbar svg { position: absolute; left: 2px; bottom: 2px; width: 77px; height: 42px; }
.vz { width: 18px; height: 68px; margin: 11px 25px 0 0; display: flex; flex-direction: column; justify-content: space-between; align-items: center; background: #484848; border-radius: 9px; }
.band { height: 9px; margin-right: 22px; background: #2f2f2f; }
.audio { border-top: 0; }
.audio .sync { margin-top: 13px; }
.ms { width: 22px; height: 30px; margin: 12px 24px 0 2px; font-size: 19px; }
.mic { width: 20px; height: 32px; margin: 11px 0 0 0; }
.band + .track .vz { margin-top: 0; }

/* audio meter */
.meter { width: 134px; flex: none; display: flex; padding: 50px 0 0 25px; }
.bars { display: grid; grid-template: 16px 400px / 16px 16px; gap: 2px 1px; }
.bars > * { background: #000; }
.bars b { grid-column: span 2; }
.meter ul { padding-top: 1px; font-size: 18px; line-height: 40px; color: #a8a8a8; }
.meter li { height: 40px; padding-left: 18px; background: linear-gradient(#a0a0a0, #a0a0a0) 2px 19px / 8px 2px no-repeat, linear-gradient(#808080, #808080) 3px 6px / 2px 2px no-repeat, linear-gradient(#808080, #808080) 3px 33px / 2px 2px no-repeat; }
.meter li:first-child { background: linear-gradient(#a0a0a0, #a0a0a0) 2px 19px / 8px 2px no-repeat, linear-gradient(#808080, #808080) 3px 33px / 2px 2px no-repeat; }

/* properties */
.props { width: 371px; flex: none; padding: 0 30px 0 23px; font-size: 24px; }
.tab-pr { width: 144px; margin-left: -3px; justify-content: space-between; flex: none; font-size: 24px; }
.props .menu { margin-left: 0; }
.props .tabs { margin-right: -30px; }
.tab-g { width: 117px; margin-left: 43px; flex: none; overflow: hidden; height: 34px; margin-top: 4px; line-height: 31px; border-bottom: 0; border-right: 1px solid #5a5a5a; }
.props .more { width: 48px; }
.pr-title { display: flex; align-items: center; height: 40px; margin-top: 28px; }
.pr-title svg { width: 34px; height: 34px; }
h2, h3 { font-size: 24px; font-weight: 700; color: #bcbcbc; }
.pr-title h2 { margin-left: 11px; }
.pr-title button { margin: 0 35px 0 auto; }
.pr-title button svg { width: 30px; height: 8px; }
.layers { margin-top: 19px; height: 296px; background: #0e0e0e; border: 2px solid #2e2e2e; border-radius: 9px; overflow: hidden; font-size: 22px; }
.layers li { display: flex; align-items: center; height: 49px; border-bottom: 2px solid #2e2e2e; padding: 0 0 3px 13px; }
.layers li:first-child { height: 47px; }
.layers li.sel { background: #232323; }
.layers .pen { width: 32px; height: 32px; margin: 4px 18px 0 59px; }
.layer-btns { display: flex; justify-content: flex-end; gap: 32px; margin: 28px 20px 34px 0; }
.layer-btns svg { width: 26px; height: 20px; }
.layer-btns button + button svg { width: 22px; }
.sec { border-top: 2px solid #101010; padding-top: 21px; }
h3 { display: flex; align-items: center; gap: 19px; height: 42px; }
h3 svg { width: 20px; height: 14px; }
.ap { margin-left: 34px; height: 132px; border-bottom: 2px solid #101010; padding-top: 17px; }
.ap div { display: flex; align-items: center; height: 38px; margin-top: 27px; }
h3 + .ap { height: 142px; padding-top: 27px; }
.swatch { width: 80px; height: 39px; margin: 0 11px 0 20px; border: 1px solid #0c0c0c; }
.s-blue { background: #000cff; }
.s-white { background: #fff; }
.s-none { background: repeating-conic-gradient(#494949 0 25%, #4e4e4e 0 50%) 0 0 / 40px 38px; }
.dr svg { width: 29px; height: 29px; }
.w { margin: 0 21px 0 auto; font-size: 21px; color: #5a5a5a; }
.mask { display: flex; align-items: center; gap: 17px; height: 70px; padding-bottom: 6px; margin-left: 34px; }
.sec.al { padding-top: 20px; }
.al h3 { margin-bottom: 10px; }
.kv { display: flex; align-items: center; height: 63px; margin-left: 43px; white-space: nowrap; overflow: hidden; }
.kv span { width: 219px; flex: none; }
.kv button { font-size: 22px; color: #3f8ee6; }
.kv em { font-style: normal; margin-left: 8px; }
.kv button svg { width: 28px; height: 30px; color: #bcbcbc; margin-left: 5px; }
```
